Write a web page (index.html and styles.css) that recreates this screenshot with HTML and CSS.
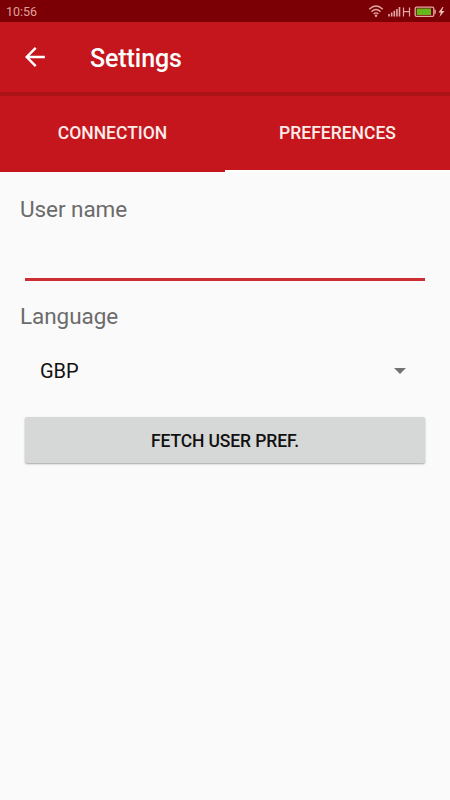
FILE: index.html
```html
<!DOCTYPE html>
<html lang="en">
<head>
<meta charset="utf-8">
<title>Settings</title>
<link rel="stylesheet" href="styles.css">
</head>
<body>
<div class="status">
  <span class="time">10:56</span>
  <svg class="status-icons" width="80" height="22" viewBox="0 0 80 22" fill="none">
    <g stroke="#e5a9a4" stroke-width="1.3">
      <path d="M-.8 9.3Q6 2.8 12.8 9.3M1.5 11.7Q6 7.3 10.500 11.7M3.600 14Q6 11.700 8.400 14"/>
      <path stroke-width="1.600" d="M19 14v2.500M21.700 12.500v4M24.300 10.700v5.800M26.900 9v7.500M29.500 7v9.500"/>
      <path stroke-width="1.200" d="M33.500 7.500v9M39.500 7.500v9M33.500 11.700H39.500"/>
      <rect x="45.200" y="7.100" width="18.600" height="9.300" rx="1.500"/>
    </g>
    <circle cx="6" cy="15.700" r="1.200" fill="#e5a9a4"/>
    <path d="M64.500 9.800h1.300v4h-1.300z" fill="#e5a9a4"/>
    <path d="M46.700 8.500h14.300v6.500H46.700z" fill="#63b81a"/>
    <path d="M72.500 7l-4 5.500h2.300L69.500 17l5-6h-2.800L73.500 7z" fill="#f0c0bb"/>
  </svg>
</div>
<header class="toolbar">
  <svg class="back" width="20" height="20" viewBox="0 0 20 20" fill="none" stroke="#fff" stroke-width="2.400">
    <path d="M19.800 10H2M10.700 .9L1.700 10l9 9.100"/>
  </svg>
  <h1>Settings</h1>
</header>
<nav class="tabs">
  <a class="tab">CONNECTION</a>
  <a class="tab active">PREFERENCES</a>
</nav>
<main>
  <label class="label" for="user">User name</label>
  <input class="field" id="user" type="text">
  <span class="label language">Language</span>
  <div class="spinner">
    <span>GBP</span>
    <svg width="12" height="6" viewBox="0 0 12 6"><path d="M0 0h12L6 6z" fill="#737373"/></svg>
  </div>
  <button class="fetch">FETCH USER PREF.</button>
</main>
</body>
</html>
```
FILE: styles.css
```css
* { box-sizing: border-box; }
body {
  margin: 0;
  min-height: 800px;
  background: #fafafa;
  font-family: Roboto, "Liberation Sans", sans-serif;
}
.status {
  height: 22px;
  display: flex;
  justify-content: space-between;
  padding-left: 6px;
  background: #7a0006;
  color: #e0a09c;
}
.time { font-size: 12.5px; line-height: 24px; }
.status-icons { overflow: visible; }
.toolbar {
  height: 70px;
  display: flex;
  align-items: center;
  padding-left: 25px;
  background: #c4161c;
  color: #fff;
}
.toolbar h1 {
  margin: 3px 0 0 45px;
  font-size: 25px;
  letter-spacing: -.08px;
  font-weight: 500;
  line-height: 30px;
}
.tabs {
  height: 80px;
  display: flex;
  border-top: 4px solid #ac1317;
  background: #c4161c;
}
.tab {
  flex: 1;
  padding-top: 1px;
  text-align: center;
  font-size: 17.5px;
  font-weight: 500;
  line-height: 73px;
  color: #fdecea;
}
.tab.active { border-bottom: 2px solid #fff; }
main {
  display: flex;
  flex-direction: column;
  padding: 22px 20px 0;
}
.label { font-size: 22.5px; letter-spacing: -.06px; line-height: 30px; color: #6b6b6b; }
.field {
  height: 57px;
  margin: 0 5px;
  border: 0;
  border-bottom: 3px solid #cc2e33;
  outline: 0;
  background: transparent;
  font: 22px Roboto, sans-serif;
}
.language { margin-top: 20px; }
.spinner {
  height: 60px;
  margin-top: 9px;
  padding: 1px 24px 0 20px;
  display: flex;
  align-items: center;
  justify-content: space-between;
  font-size: 20px;
  color: #111;
}
.fetch {
  height: 46px;
  margin: 17px 5px 0;
  padding: 2px 0 0;
  border: 0;
  border-radius: 2px;
  background: #d6d8d7;
  box-shadow: 0 1px 2px rgba(0, 0, 0, .35);
  font: 500 17.5px Roboto, sans-serif;
  letter-spacing: -.12px;
  color: #111;
}
```
